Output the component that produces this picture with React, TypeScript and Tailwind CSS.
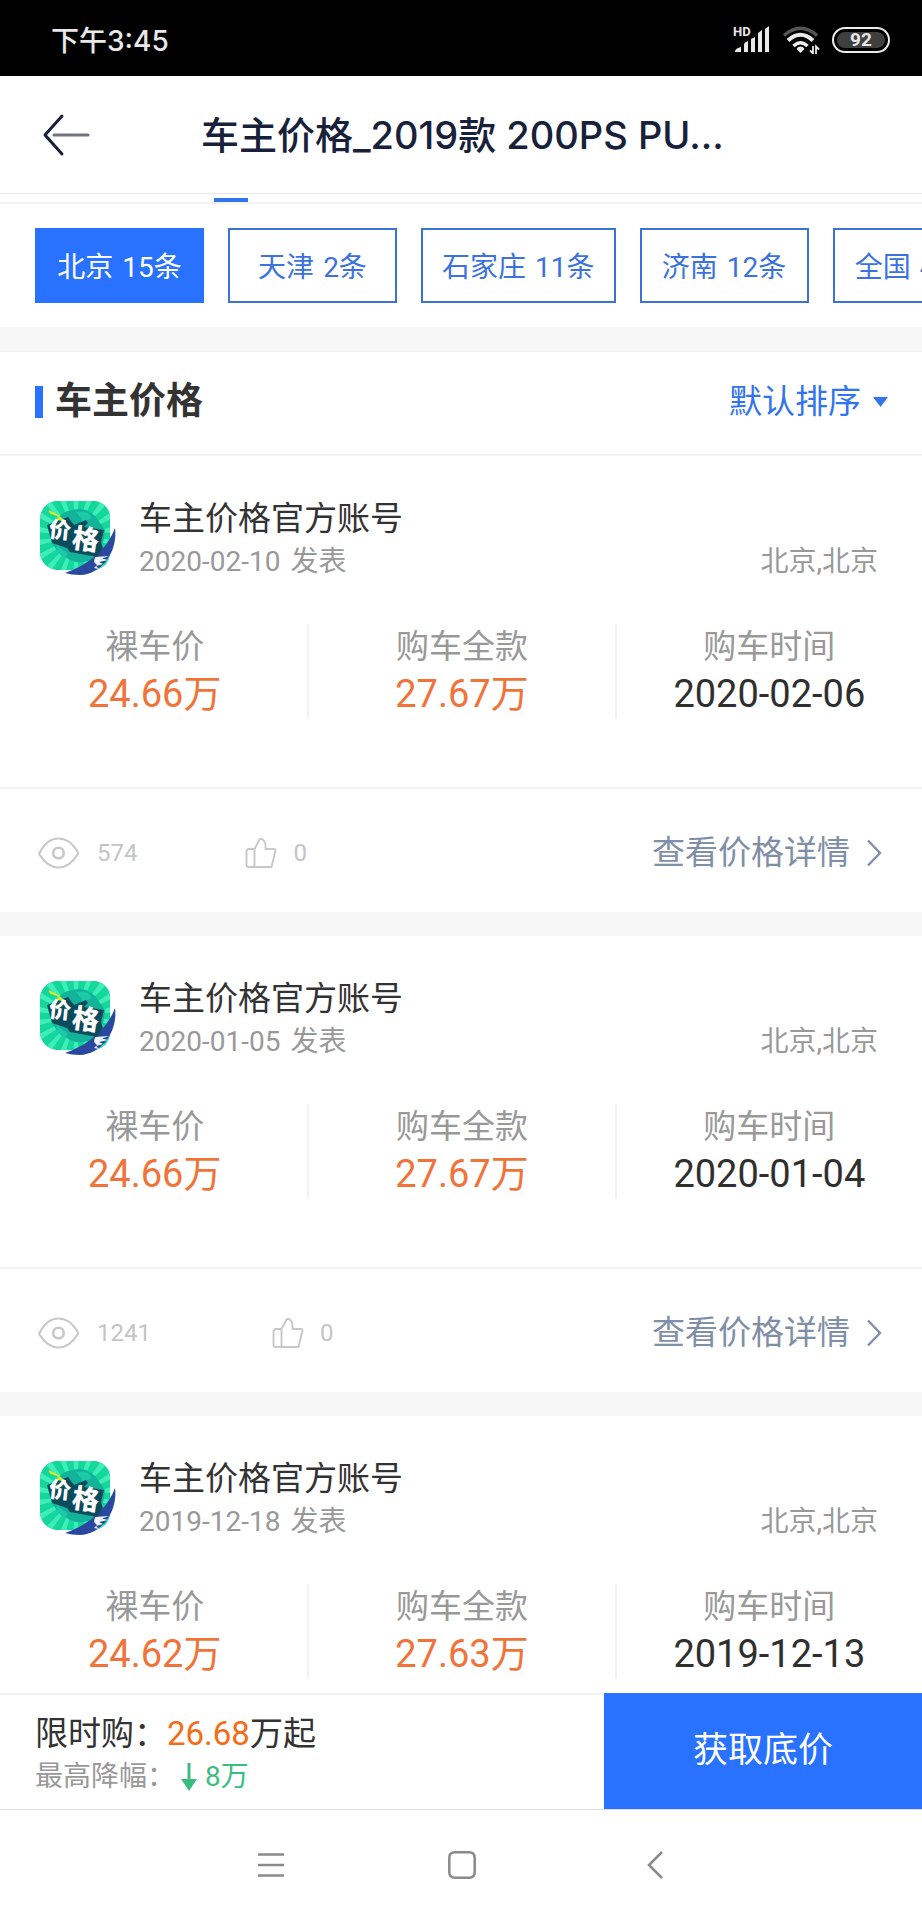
import React from "react";

const BODY_FONT = "font-['Roboto','Noto_Sans_CJK_SC',sans-serif]";
const SYSTEM_FONT = "font-['Inter','Noto_Sans_CJK_SC',sans-serif]";

type Meta = { views: string; likes: string; spacing: string };
type Post = { date: string; place: string; net: string; total: string; bought: string; meta?: Meta };

const cities = [
  { name: "北京", count: "15条" },
  { name: "天津", count: "2条" },
  { name: "石家庄", count: "11条" },
  { name: "济南", count: "12条" },
  { name: "全国", count: "40条" },
];

const posts: Post[] = [
  { date: "2020-02-10", place: "北京,北京", net: "24.66万", total: "27.67万", bought: "2020-02-06", meta: { views: "574", likes: "0", spacing: "ml-[108px]" } },
  { date: "2020-01-05", place: "北京,北京", net: "24.66万", total: "27.67万", bought: "2020-01-04", meta: { views: "1241", likes: "0", spacing: "ml-[121px]" } },
  { date: "2019-12-18", place: "北京,北京", net: "24.62万", total: "27.63万", bought: "2019-12-13" },
];

function SignalIcon() {
  return (
    <svg width="38" height="30" viewBox="-2 -2 38 30" fill="#e8e8e8" aria-hidden="true">
      <path d="M1 25v-1q1-3 6-4v5zM10 25V17q1-2 4-3v11zM17 25V12l4-2v15zM24 25V6l4-3v22zM31 25V2l4-3v26z" />
      <text x="-1" y="9" fontSize="13" fontWeight="700" fontFamily="Roboto, sans-serif">HD</text>
    </svg>
  );
}

function WifiIcon() {
  return (
    <svg width="38" height="28" viewBox="0 0 38 28" fill="none" strokeWidth="4" aria-hidden="true">
      <path d="M2 9.500Q18.500-5 35 9.500" stroke="#565656" strokeWidth="3.500" />
      <path d="M6 14.500Q18.500 3 31 14.500" stroke="#ececec" />
      <path d="M11.500 20Q18.500 13.500 25.500 20" stroke="#ececec" strokeWidth="3.500" />
      <path d="M14.500 23a4.500 4.500 0 0 1 8 0l-4 4z" fill="#ececec" />
      <path d="M31 20v7.500l-3-3M34 28v-7.500l3 3" stroke="#ececec" strokeWidth="1.800" />
    </svg>
  );
}

function EyeIcon() {
  return (
    <svg width="42" height="32" viewBox="0 0 42 32" fill="none" stroke="#c8c8c8" strokeWidth="2.200" aria-hidden="true">
      <path d="M1.500 16C6 7 12 1.500 20.500 1.500S35 7 39.500 14.500Q40.500 16 39.500 17.500C35 25 29 30.500 20.500 30.500S6 25 1.500 17.500Q1 16.700 1.500 16z" />
      <circle cx="20.500" cy="16" r="5.300" strokeWidth="2.600" />
    </svg>
  );
}

function ThumbIcon() {
  return (
    <svg width="32" height="32" viewBox="0 0 32 32" fill="none" stroke="#c8c8c8" strokeWidth="1.900" strokeLinejoin="round" aria-hidden="true">
      <path d="M9.500 12H4Q1.500 12 1.500 14.500V28Q1.500 30 3.500 30H26.500L30.500 13.500Q30.500 12 29 12H20.500V8Q20.500 6 19 4L17.500 2.200Q16 1 14.500 2.500L9.500 12V30" />
    </svg>
  );
}

function Avatar() {
  const rays = Array.from({ length: 18 }, (_, i) => i * 20);
  return (
    <svg width="76" height="76" viewBox="0 0 76 76" className="shrink-0" role="img" aria-label="头像">
      <defs>
        <clipPath id="tile">
          <path d="M15 1H56Q70 5 70 18V54Q68 68 54 70H16Q2 67 0 54V17Q2 4 15 1z" />
        </clipPath>
      </defs>
      <g clipPath="url(#tile)">
        <rect width="76" height="76" fill="#13d79b" />
        {rays.map((a) => (
          <path key={a} d="M36 36L32 -20L40 -20z" fill="#3fedb8" transform={`rotate(${a} 36 36)`} />
        ))}
        <path d="M16 20Q24 9 40 9Q52 10 58 20L65 30Q64 48 56 56Q46 64 36 62Q18 56 12 42Q10 30 16 20z" fill="#12b39a" />
        <path d="M36 12Q48 10 52 18L44 22zM16 44L28 54L24 58Q16 52 16 44z" fill="#1cc9a8" />
      </g>
      <path d="M25 73C45 66 66 52 75 28C78 50 63 74 40 75C34 75 29 74 25 73z" fill="#2a489f" />
      <path d="M55 57L69 56L62 58.500L68 60L59 62L63 64L56 66L59 69L54 68L57 65L54 62z" fill="#eef4fb" />
      <path d="M7 25L28 17L34 25L46 20L48 23L44 27L64 30L61 42L63 48L57 57L30 52L27 48L12 43z" fill="#0b4b5c" />
      <path d="M9 11L17 15L24 21L18 19L19 16L11 13z" fill="#d8ea2b" stroke="#d8ea2b" strokeWidth="1.500" />
      <g fill="#ffffff" fontWeight="900" fontFamily="'Noto Sans CJK SC', sans-serif">
        <text x="9" y="38" fontSize="22" transform="rotate(6 20 30)">价</text>
        <text x="32" y="49" fontSize="27" transform="rotate(8 46 40)">格</text>
      </g>
    </svg>
  );
}

function StatusBar() {
  return (
    <div className={`${SYSTEM_FONT} flex h-[76px] items-center justify-between bg-black pr-8 pl-[51px] text-[#e8e8e8]`}>
      <span className="pt-[6px] text-[28px] leading-10 font-medium">下午3:45</span>
      <div className="flex items-center gap-3 pt-1">
        <SignalIcon />
        <WifiIcon />
        <span className="flex h-[26px] w-[58px] rounded-full border-2 border-[#ececec] p-[3px]">
          <span className="flex flex-1 items-center justify-center rounded-full bg-[#3f3f3f] font-['Roboto',sans-serif] text-[19px] leading-4 font-bold">92</span>
        </span>
      </div>
    </div>
  );
}

function Stat({ label, value, accent }: { label: string; value: string; accent?: boolean }) {
  return (
    <div className="flex flex-col items-center border-l-2 border-[#f3f3f3] first:border-transparent">
      <dt className="text-[33px] leading-[46px] text-[#999999]">{label}</dt>
      <dd className={accent ? "text-[38px] leading-[48px] text-[#f0733a]" : "text-[38px] leading-[48px] text-[#2f2f2f]"}>{value}</dd>
    </div>
  );
}

function PostCard({ post }: { post: Post }) {
  return (
    <article className="border-b-24 border-[#f7f7f7] bg-white last:border-0">
      <div className="flex items-start pt-11 pr-11 pl-10">
        <Avatar />
        <div className="ml-[23px] flex flex-1 flex-col pt-[3px]">
          <h2 className="text-[33px] leading-8 text-[#333333]">车主价格官方账号</h2>
          <div className="mt-[9px] flex gap-[10px] text-[28px] leading-9 text-[#999999]">
            <time>{post.date}</time>
            <span>发表</span>
            <span className="ml-auto">{post.place}</span>
          </div>
        </div>
      </div>
      <dl className="mt-11 grid grid-cols-3">
        <Stat label="裸车价" value={post.net} accent />
        <Stat label="购车全款" value={post.total} accent />
        <Stat label="购车时间" value={post.bought} />
      </dl>
      {post.meta && (
        <div className="mt-[69px] flex h-[125px] items-center border-t-2 border-[#f3f3f3] pt-1 pr-10 pl-[38px] text-[24px] text-[#c4c4c4]">
          <EyeIcon />
          <span className="ml-[17px]">{post.meta.views}</span>
          <button type="button" className={`${post.meta.spacing} flex items-center gap-4`} aria-label="点赞">
            <ThumbIcon />
            <span>{post.meta.likes}</span>
          </button>
          <a href="#detail" className="ml-auto flex items-center gap-4 text-[33px] leading-10 text-[#7f8fa8]">
            查看价格详情
            <svg width="16" height="28" viewBox="0 0 16 28" fill="none" stroke="currentColor" strokeWidth="2.400" aria-hidden="true">
              <path d="M2 1.500L14 14L2 26.500" />
            </svg>
          </a>
        </div>
      )}
    </article>
  );
}

export default function App() {
  return (
    <div className={`${BODY_FONT} flex min-h-screen flex-col overflow-x-hidden bg-white`}>
      <StatusBar />
      <header className="flex h-[118px] items-center border-b border-[#e9e9e9] pr-[160px] pl-[42px]">
        <button type="button" aria-label="返回" className="w-[159px]">
          <svg width="48" height="44" viewBox="0 0 48 44" fill="none" strokeLinecap="round" strokeWidth="3" aria-hidden="true">
            <path d="M12 22H46" stroke="#70757f" />
            <path d="M20 3L3 22L20 41" stroke="#17213a" strokeLinejoin="round" />
          </svg>
        </button>
        <h1 className={`${SYSTEM_FONT} flex-1 text-[38px] leading-[52px] font-medium whitespace-nowrap text-[#17213a]`}>
          车主价格_2019款 200PS PU...
        </h1>
      </header>
      <div className="flex h-[10px] items-end border-b-2 border-[#f3f3f3] pl-[214px]">
        <span className="h-1 w-[34px] bg-[#3273ee]" />
      </div>
      <nav className="flex gap-6 overflow-hidden border-b-24 border-[#f7f7f7] py-6 pl-[35px]">
        {cities.map((city, i) => (
          <button
            key={city.name}
            type="button"
            className={
              i === 0
                ? "flex h-[75px] min-w-[169px] shrink-0 items-center justify-center gap-[9px] border-2 border-[#2872ff] bg-[#2872ff] px-[19px] pt-1 text-[28px] text-white"
                : "flex h-[75px] min-w-[169px] shrink-0 items-center justify-center gap-[9px] border-2 border-[#3b72d6] px-[19px] pt-1 text-[28px] text-[#3b72e0]"
            }
          >
            <span>{city.name}</span>
            <span>{city.count}</span>
          </button>
        ))}
      </nav>
      <div className="flex h-[105px] items-center border-t border-b-2 border-t-[#eeeeee] border-b-[#f3f3f3] pr-[34px] pb-[3px] pl-[35px]">
        <span className="h-8 w-2 bg-[#2872ff]" />
        <h2 className="ml-3 text-[37px] leading-[52px] font-bold text-[#333333]">车主价格</h2>
        <button type="button" className="ml-auto flex items-center gap-3 text-[33px] leading-10 text-[#3273ee]">
          默认排序
          <svg width="15" height="10" viewBox="0 0 15 10" fill="currentColor" aria-hidden="true">
            <path d="M0 0H15L7.500 10z" />
          </svg>
        </button>
      </div>
      <main className="flex-1">
        {posts.map((post) => (
          <PostCard key={post.date} post={post} />
        ))}
      </main>
      <footer className="sticky bottom-0 bg-white">
        <div className="flex h-[116px]">
          <div className="flex flex-1 flex-col justify-center border-t-2 border-[#f3f3f3] pt-1 pl-[35px]">
            <p className="text-[33px] leading-[46px] text-[#333333]">
              限时购：<span className="text-[#f36d16]">26.68</span>万起
            </p>
            <p className="flex items-center text-[28px] leading-10 text-[#999999]">
              最高降幅：
              <svg width="16" height="28" viewBox="0 0 16 28" fill="#3bbd82" className="ml-[6px]" aria-hidden="true">
                <path d="M6.500 0H9.500V16H16L8 28L0 16H6.500z" />
              </svg>
              <span className="ml-2 text-[#3bbd82]">8万</span>
            </p>
          </div>
          <button type="button" className="w-[318px] bg-[#2872ff] text-[35px] text-white">获取底价</button>
        </div>
        <div className="flex h-[111px] items-center justify-center gap-[164px] border-t border-[#dddddd] pl-1 text-[#8a8a8a]">
          <button type="button" aria-label="菜单">
            <svg width="26" height="28" viewBox="0 0 26 28" fill="none" stroke="currentColor" strokeWidth="2.500" aria-hidden="true">
              <path d="M0 3.500H26M0 14H26M0 24.500H26" />
            </svg>
          </button>
          <button type="button" aria-label="主页">
            <svg width="28" height="28" viewBox="0 0 28 28" fill="none" stroke="currentColor" strokeWidth="2.500" aria-hidden="true">
              <path d="M7 1.300H21Q26.700 1.300 26.700 7V21Q26.700 26.700 21 26.700H7Q1.300 26.700 1.300 21V7Q1.300 1.300 7 1.300z" />
            </svg>
          </button>
          <button type="button" aria-label="后退">
            <svg width="28" height="28" viewBox="0 0 28 28" fill="none" stroke="currentColor" strokeWidth="2.500" aria-hidden="true">
              <path d="M22 1L9 14L22 27" />
            </svg>
          </button>
        </div>
      </footer>
    </div>
  );
}
